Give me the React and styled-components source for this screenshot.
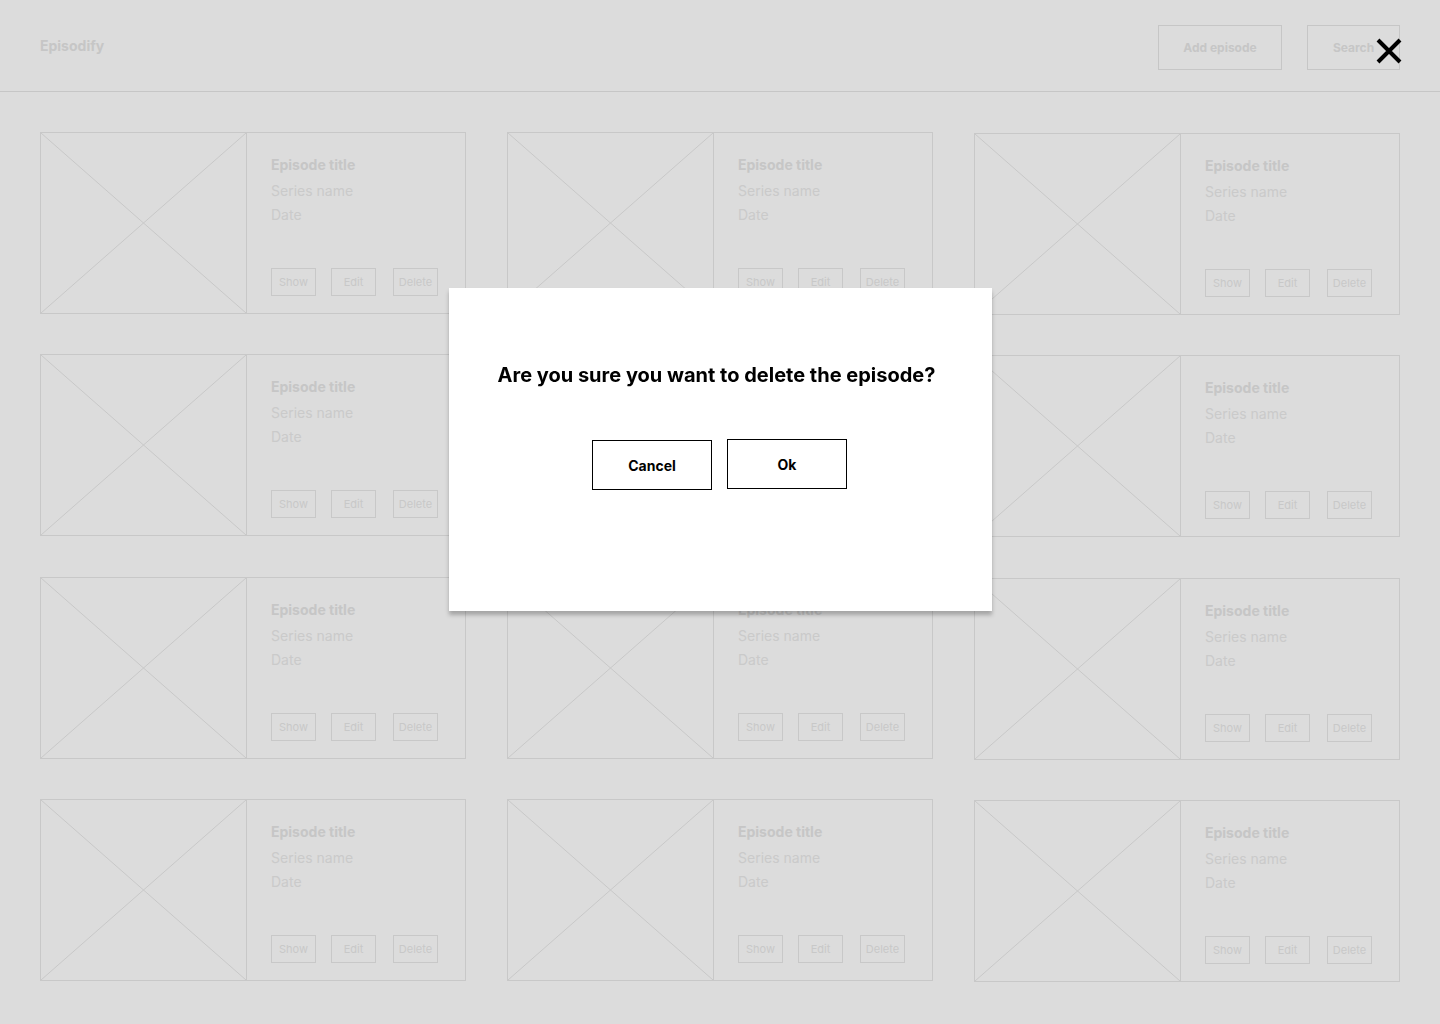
import React from "react";
import styled, { createGlobalStyle } from "styled-components";

const GlobalStyle = createGlobalStyle`
  * { box-sizing: border-box; }
  body {
    margin: 0;
    background: #dcdcdc;
    font-family: Inter, "Noto Sans", sans-serif;
  }
`;

const episodes = Array.from({ length: 12 }, (_, i) => i);

export default function App() {
  return (
    <>
      <GlobalStyle />
      <Page>
        <Header>
          <Logo>Episodify</Logo>
          <Actions>
            <HeaderButton $width={124}>Add episode</HeaderButton>
            <HeaderButton $width={93}>Search</HeaderButton>
          </Actions>
        </Header>
        <Grid>
          {episodes.map((i) => (
            <Card key={i} $shift={i % 3 === 2}>
              <Thumb>
                <svg width="100%" height="100%" viewBox="0 0 100 100" preserveAspectRatio="none">
                  <line x1="0" y1="0" x2="100" y2="100" stroke="#c8c8c8" strokeWidth="1" vectorEffect="non-scaling-stroke" />
                  <line x1="100" y1="0" x2="0" y2="100" stroke="#c8c8c8" strokeWidth="1" vectorEffect="non-scaling-stroke" />
                </svg>
              </Thumb>
              <Info>
                <Title>Episode title</Title>
                <Meta>Series name</Meta>
                <Meta>Date</Meta>
                <CardActions>
                  <SmallButton>Show</SmallButton>
                  <SmallButton>Edit</SmallButton>
                  <SmallButton>Delete</SmallButton>
                </CardActions>
              </Info>
            </Card>
          ))}
        </Grid>
      </Page>

      <CloseButton aria-label="Close">
        <svg width="26" height="26" viewBox="0 0 26 26">
          <path d="M2 2 L24 24 M24 2 L2 24" stroke="#000" strokeWidth="4" />
        </svg>
      </CloseButton>

      <Modal>
        <Question>Are you sure you want to delete the episode?</Question>
        <ModalActions>
          <ModalButton>Cancel</ModalButton>
          <ModalButton $up>Ok</ModalButton>
        </ModalActions>
      </Modal>
    </>
  );
}

const Page = styled.div`
  min-height: 1024px;
`;

const Header = styled.header`
  height: 92px;
  padding: 0 40px;
  display: flex;
  align-items: center;
  justify-content: space-between;
  border-bottom: 1px solid #c6c6c6;
`;

const Logo = styled.div`
  font-size: 14px;
  font-weight: 700;
  color: #c6c6c6;
  margin-top: -1px;
`;

const Actions = styled.div`
  display: flex;
  gap: 25px;
  margin-top: 3px;
`;

const HeaderButton = styled.button`
  width: ${(p) => p.$width}px;
  height: 45px;
  background: transparent;
  border: 1px solid #c6c6c6;
  font-family: inherit;
  font-size: 12px;
  font-weight: 700;
  color: #c6c6c6;
`;

const Grid = styled.main`
  padding: 40px 40px;
  display: grid;
  grid-template-columns: repeat(3, 426px);
  column-gap: 41px;
  row-gap: 40.4px;
`;

const Card = styled.article`
  height: 182px;
  display: flex;
  border: 1px solid #c8c8c8;
  transform: translateY(${(p) => (p.$shift ? "1px" : "0")});
`;

const Thumb = styled.div`
  width: 206px;
  height: 100%;
  border-right: 1px solid #c8c8c8;
  svg { display: block; }
`;

const Info = styled.div`
  flex: 1;
  display: flex;
  flex-direction: column;
  padding: 23px 24px 17px;
`;

const Title = styled.div`
  font-size: 14px;
  font-weight: 700;
  line-height: 17px;
  color: #c6c6c6;
  margin-bottom: 9px;
`;

const Meta = styled.div`
  font-size: 14px;
  line-height: 17px;
  color: #cacaca;
  margin-bottom: 7px;
`;

const CardActions = styled.div`
  margin-top: auto;
  display: flex;
  gap: 15px;
  & > :last-child { margin-left: 2px; }
`;

const SmallButton = styled.button`
  width: 45px;
  height: 28px;
  padding: 0;
  background: transparent;
  border: 1px solid #c8c8c8;
  font-family: inherit;
  font-size: 11px;
  color: #c8c8c8;
`;

const CloseButton = styled.button`
  position: fixed;
  top: 38px;
  left: 1376px;
  padding: 0;
  border: none;
  background: transparent;
  svg { display: block; }
`;

const Modal = styled.div`
  position: fixed;
  top: 288px;
  left: 449px;
  width: 543px;
  height: 323px;
  background: #fff;
  box-shadow: 0 4px 4px rgba(0, 0, 0, 0.25);
  display: flex;
  flex-direction: column;
  align-items: center;
  padding-top: 75px;
`;

const Question = styled.h2`
  margin: 0 8px 0 0;
  font-size: 20px;
  font-weight: 700;
  line-height: 24px;
  color: #000;
`;

const ModalActions = styled.div`
  display: flex;
  gap: 15px;
  margin: 53px 2px 0 0;
`;

const ModalButton = styled.button`
  width: 120px;
  height: 50px;
  background: #fff;
  border: 1px solid #000;
  font-family: inherit;
  font-size: 14px;
  font-weight: 700;
  color: #000;
  transform: translateY(${(p) => (p.$up ? "-1px" : "0")});
`;
